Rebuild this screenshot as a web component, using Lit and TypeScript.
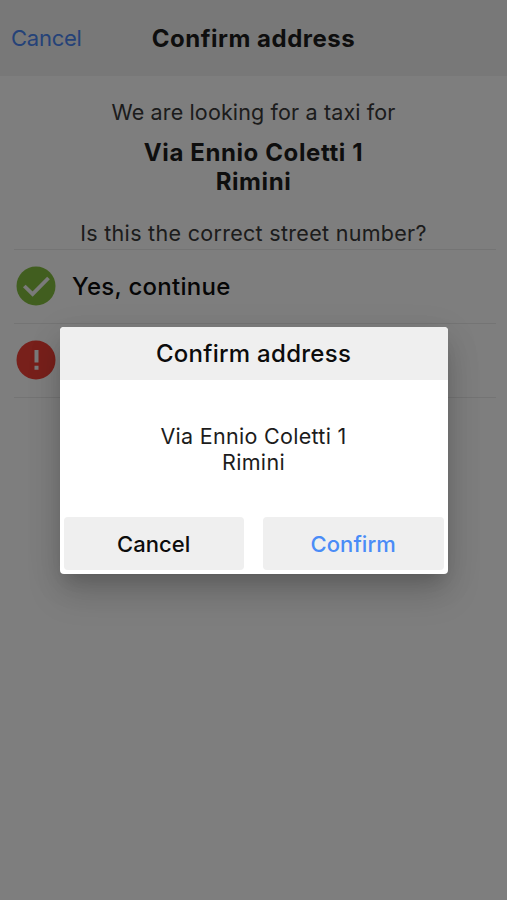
import { LitElement, html, css } from "lit";
import { customElement } from "lit/decorators.js";

@customElement("confirm-dialog")
class ConfirmDialog extends LitElement {
  static styles = css`
    :host {
      display: flex;
      flex-direction: column;
      box-sizing: border-box;
      width: 388px;
      height: 247px;
      border-radius: 4px;
      overflow: hidden;
      background: #fff;
      color: #0c0c0c;
      box-shadow: 0 11px 15px -7px rgba(0, 0, 0, 0.12), 0 20px 34px 0 rgba(0, 0, 0, 0.15),
        0 7px 34px 2px rgba(0, 0, 0, 0.08);
    }
    .title {
      height: 53px;
      line-height: 54px;
      background: #efefef;
      text-align: center;
      font-size: 24px;
      font-weight: 500;
      letter-spacing: 0.27px;
    }
    .message {
      flex: 1;
      padding-top: 43px;
      text-align: center;
      font-size: 21.5px;
      line-height: 26px;
      letter-spacing: 0.3px;
      color: #1c1c1c;
    }
    .actions {
      display: flex;
      gap: 19px;
      padding: 0 4px 4px;
    }
    .action {
      flex: 1;
      height: 53px;
      padding: 1px 0 0;
      border: 0;
      border-radius: 4px;
      background: #efefef;
      color: #0c0c0c;
      font: 500 22px/53px Inter, sans-serif;
      letter-spacing: 0.05px;
    }
    .primary {
      color: #4a8cf7;
    }
  `;
  render() {
    return html`
      <div class="title">Confirm address</div>
      <div class="message">Via Ennio Coletti 1<br />Rimini</div>
      <div class="actions">
        <button class="action">Cancel</button>
        <button class="action primary">Confirm</button>
      </div>
    `;
  }
}

@customElement("app-root")
class AppRoot extends LitElement {
  static styles = css`
    :host {
      display: block;
      position: relative;
      height: 900px;
      overflow: hidden;
      background: #fcfcfc;
      font-family: Inter, sans-serif;
      color: #1c1c1c;
    }
    .bar {
      display: grid;
      grid-template-columns: 1fr auto 1fr;
      align-items: center;
      height: 76px;
      padding: 0 11px;
      background: #f0f0f0;
    }
    .back {
      color: #4a85f0;
      font-size: 22px;
      letter-spacing: -0.25px;
    }
    .heading {
      font-size: 24px;
      font-weight: 700;
      letter-spacing: 0.5px;
    }
    .intro {
      height: 173px;
      box-sizing: border-box;
      padding-top: 23px;
      text-align: center;
    }
    .text {
      font-size: 21.5px;
      line-height: 26px;
      color: #383838;
    }
    .lead {
      letter-spacing: 0.14px;
    }
    .question {
      letter-spacing: 0.3px;
    }
    .address {
      margin: 13px 0 24px;
      font-size: 24px;
      line-height: 29px;
      font-weight: 700;
      letter-spacing: 0.6px;
    }
    .options {
      margin: 0 11px 0 14px;
      border-top: 1px solid #e8e8e8;
    }
    .option {
      display: flex;
      align-items: center;
      gap: 16px;
      box-sizing: border-box;
      height: 74px;
      padding: 0 0 1px 2px;
      border-bottom: 1px solid #e8e8e8;
      font-size: 24px;
      font-weight: 500;
      letter-spacing: 0.27px;
      color: #0c0c0c;
    }
    .icon {
      width: 40px;
      height: 40px;
    }
    .overlay {
      position: absolute;
      inset: 0;
      display: flex;
      justify-content: center;
      align-items: center;
      padding-top: 1px;
      box-sizing: border-box;
      background: rgba(0, 0, 0, 0.5);
    }
  `;
  render() {
    return html`
      <header class="bar">
        <span class="back">Cancel</span>
        <span class="heading">Confirm address</span>
      </header>
      <section class="intro">
        <div class="text lead">We are looking for a taxi for</div>
        <div class="address">Via Ennio Coletti 1<br />Rimini</div>
        <div class="text question">Is this the correct street number?</div>
      </section>
      <section class="options">
        <div class="option">
          <svg class="icon" viewBox="0 0 40 40">
            <circle cx="20" cy="20" r="19.5" fill="#83bd3e" />
            <path d="M8.3 20 16.6 28 32.5 12" fill="none" stroke="#f4f4f4" stroke-width="3.8" />
          </svg>
          <span>Yes, continue</span>
        </div>
        <div class="option">
          <svg class="icon" viewBox="0 0 40 40">
            <circle cx="20" cy="20" r="19.5" fill="#f04036" />
            <path d="M20.5 10V22.5M20.5 25.7V29.7" fill="none" stroke="#f4f4f4" stroke-width="4" />
          </svg>
        </div>
      </section>
      <div class="overlay"><confirm-dialog></confirm-dialog></div>
    `;
  }
}
